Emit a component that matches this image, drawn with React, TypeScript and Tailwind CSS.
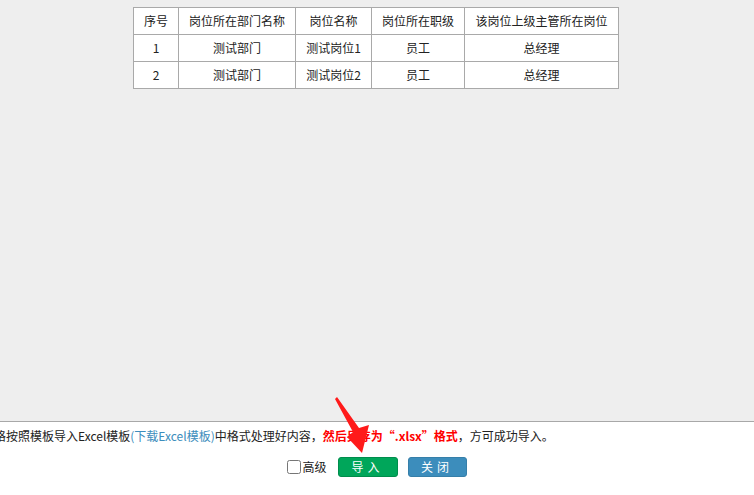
import React from "react";

type PostRow = {
  no: number;
  dept: string;
  post: string;
  level: string;
  superior: string;
};

const rows: PostRow[] = [
  { no: 1, dept: "测试部门", post: "测试岗位1", level: "员工", superior: "总经理" },
  { no: 2, dept: "测试部门", post: "测试岗位2", level: "员工", superior: "总经理" },
];

const headers = ["序号", "岗位所在部门名称", "岗位名称", "岗位所在职级", "该岗位上级主管所在岗位"];
const colWidths = ["w-[45px]", "w-[117px]", "w-[76px]", "w-[93px]", "w-[154px]"];

const cell = "border border-[#a9a9a9] h-[27px] px-2 text-center align-middle";

const PreviewTable = () => (
  <table className="border-collapse bg-white text-[12px] text-[#222] table-fixed">
    <colgroup>
      {colWidths.map((w, i) => (
        <col key={i} className={w} />
      ))}
    </colgroup>
    <thead>
      <tr>
        {headers.map((h) => (
          <th key={h} className={`${cell} font-normal`}>
            {h}
          </th>
        ))}
      </tr>
    </thead>
    <tbody>
      {rows.map((r) => (
        <tr key={r.no}>
          <td className={cell}>{r.no}</td>
          <td className={cell}>{r.dept}</td>
          <td className={cell}>{r.post}</td>
          <td className={cell}>{r.level}</td>
          <td className={cell}>{r.superior}</td>
        </tr>
      ))}
    </tbody>
  </table>
);

export default function App() {
  return (
    <div
      className="relative w-[754px] h-[495px] flex flex-col overflow-hidden bg-[#eeeeee]"
      style={{ fontFamily: '"Noto Sans CJK SC", "Noto Sans", sans-serif' }}
    >
      <div className="h-[421px] pt-[7px] pl-[133px]">
        <PreviewTable />
      </div>

      <div className="flex-1 bg-white border-t border-[#a8a8a8] overflow-hidden">
        <p className="whitespace-nowrap text-[12px] leading-[16px] text-[#222] mt-[6px] -ml-[6px]">
          格按照模板导入Excel模板
          <a className="text-[#3c8dbc] cursor-pointer">(下载Excel模板)</a>
          中格式处理好内容，
          <span className="text-[#ff0000] font-bold">然后另存为“.xlsx”格式</span>
          ，方可成功导入。
        </p>
        <div className="flex items-center justify-center mt-[13px] pl-[-2px]">
          <label className="flex items-center text-[12px] text-[#222] mr-[11px]">
            <input type="checkbox" className="w-[14px] h-[14px] m-0 mr-[1px]" />
            高级
          </label>
          <button className="w-[60px] h-[20px] rounded-[3px] bg-[#00a65a] border border-[#008d4c] text-white text-[12px] tracking-[4px] mr-[10px]">
            导入
          </button>
          <button className="w-[59px] h-[20px] rounded-[3px] bg-[#3c8dbc] border border-[#367fa9] text-white text-[12px] tracking-[4px]">
            关闭
          </button>
        </div>
      </div>

      {/* red pointer drawn over the footer */}
      <svg className="absolute left-0 top-0 pointer-events-none" width="754" height="495">
        <polygon
          points="337,397 359,428 369,425 362,453 347,437 353,432 335,399"
          fill="#ff1a1a"
        />
      </svg>
    </div>
  );
}
